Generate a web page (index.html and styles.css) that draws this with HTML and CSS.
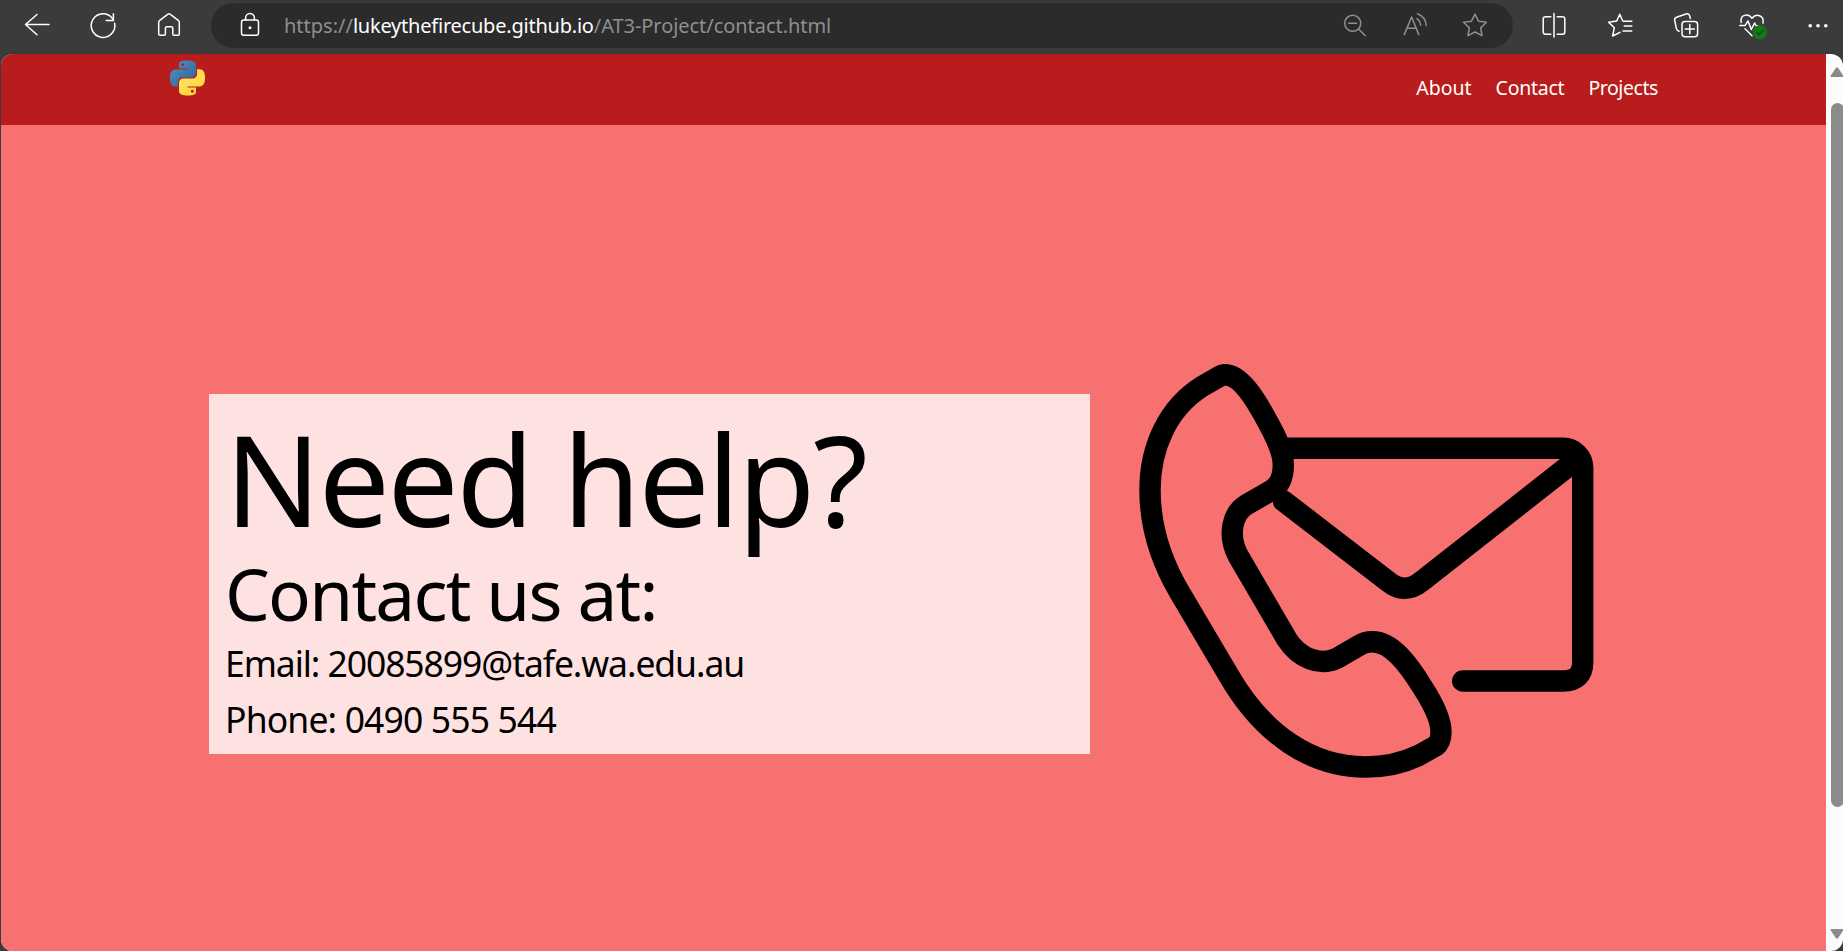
FILE: index.html
```html
<!DOCTYPE html>
<html lang="en">
<head>
<meta charset="utf-8">
<title>Contact</title>
<link rel="stylesheet" href="styles.css">
</head>
<body>
<div class="browser">
  <div class="toolbar">
    <span class="tool"><svg class="icon" viewBox="0 0 30 30"><path d="M3.5 14.5H27M15 4.5L3.5 14.5 15 24.8"/></svg></span>
    <span class="tool"><svg class="icon" viewBox="0 0 30 30"><path d="M26.6 13.2A11.8 11.8 0 1 1 24.6 8.7M25.4 3.8V10.6H18.2"/></svg></span>
    <span class="tool"><svg class="icon" viewBox="0 0 30 30"><path d="M4.7 12.2Q4.7 11.3 5.4 10.7L14 4.2Q15 3.4 16 4.2L24.6 10.7Q25.3 11.3 25.3 12.2V24Q25.3 25.3 24 25.3H20Q18.8 25.3 18.8 24V18.2Q18.8 16.8 17.4 16.8H12.8Q11.4 16.8 11.4 18.2V24Q11.4 25.3 10.2 25.3H6Q4.7 25.3 4.7 24Z"/></svg></span>
    <div class="address">
      <svg class="icon lock" viewBox="0 0 30 30"><rect x="6.5" y="10" width="17" height="15.3" rx="2.3"/><path d="M10.6 10V7.8a4.4 4.4 0 0 1 8.8 0V10"/><circle class="dot" cx="15" cy="17.8" r="1.5"/></svg>
      <div class="url"><span class="scheme">https://</span><span class="host">lukeythefirecube.github.io</span><span class="path">/AT3-Project/contact.html</span></div>
      <div class="address-tools">
        <svg class="icon" viewBox="0 0 30 30"><circle cx="12.7" cy="13.3" r="8"/><path d="M8.7 13.3H16.7M18.5 19L25.3 25.7"/></svg>
        <svg class="icon" viewBox="0 0 30 30"><path d="M4.3 24.6L11.6 7 18.8 24.6M7 18.2H16.2M17 8.7Q20 10.6 20.6 15M17.5 3.8Q25.6 7 26.3 15.5"/></svg>
        <svg class="icon" viewBox="0 0 30 30"><path d="M15 4.2L18.5 11.2 26.4 12.3 20.7 17.9 22 25.7 15 22 8 25.7 9.3 17.9 3.6 12.3 11.5 11.2Z"/></svg>
      </div>
    </div>
    <div class="actions">
      <span class="tool"><svg class="icon" viewBox="0 0 30 30"><path d="M11.8 6.8H6.5Q4.2 6.8 4.2 9V22Q4.2 24.2 6.5 24.2H11.8M18.2 6.8H23.5Q25.8 6.8 25.8 9V22Q25.8 24.2 23.5 24.2H18.2M15 3.5V27"/></svg></span>
      <span class="tool"><svg class="icon" viewBox="0 0 30 30"><path d="M17.6 10.7L14.8 4.3 11.6 11.1 3.6 12.2 9.3 17.8 7.6 26 15 22.3M18 11.3H26.8M19.3 16H26.8M18 21H26.8"/></svg></span>
      <span class="tool"><svg class="icon" viewBox="0 0 30 30"><rect x="11" y="11.4" width="15.6" height="15.4" rx="3"/><path d="M18.8 14.5V23.8M14.2 19.1H23.4M8 21.3Q6 20.6 5.4 18.6L3.7 10.3Q3.3 8 5.5 7.2L15 4Q17.6 3.3 18.5 5.6L19.4 8.4"/></svg></span>
      <span class="tool"><svg class="icon" viewBox="0 0 30 30"><path d="M4.2 12.5C2.7 4.5 11 3 15 8.2 19 3 27.5 5 26 13.2M2.8 15.6H8L11 11 14.3 19.5 17.6 13 19.3 16H21M8 18.8L15 25.7"/><circle class="badge" cx="23" cy="22.3" r="7"/><path class="tick" d="M19.8 22.4L22 24.8 26.5 19.8"/></svg></span>
      <span class="tool"><svg class="icon" viewBox="0 0 30 30"><circle class="dot" cx="7.2" cy="15.7" r="1.8"/><circle class="dot" cx="15" cy="15.7" r="1.8"/><circle class="dot" cx="22.8" cy="15.7" r="1.8"/></svg></span>
    </div>
  </div>
  <div class="viewport">
    <div class="page">
      <header class="site-header">
        <svg class="logo" viewBox="0 0 24 24">
          <defs>
            <linearGradient id="blue" x1="0" y1="0" x2="1" y2="1"><stop offset="0" stop-color="#4f96cb"/><stop offset="1" stop-color="#2d5e8c"/></linearGradient>
            <linearGradient id="yellow" x1="1" y1="1" x2="0" y2="0"><stop offset="0" stop-color="#ffe873"/><stop offset="1" stop-color="#ffd02c"/></linearGradient>
            <path id="snake" d="M14.25.18l.9.2.73.26.59.3.45.32.34.34.25.34.16.33.1.3.04.26.02.2-.01.13V8.5l-.05.63-.13.55-.21.46-.26.38-.3.31-.33.25-.35.19-.35.14-.33.1-.3.07-.26.04-.21.02H8.77l-.69.05-.59.14-.5.22-.41.27-.33.32-.27.35-.2.36-.15.37-.1.35-.07.32-.04.27-.02.21v3.06H3.17l-.21-.03-.28-.07-.32-.12-.35-.18-.36-.26-.36-.36-.35-.46-.32-.59-.28-.73-.21-.88-.14-1.05-.05-1.23.06-1.22.16-1.04.24-.87.32-.71.36-.57.4-.44.42-.33.42-.24.4-.16.36-.1.32-.05.24-.01h.16l.06.01h8.16v-.83H6.18l-.01-2.75-.02-.37.05-.34.11-.31.17-.28.25-.26.31-.23.38-.2.44-.18.51-.15.58-.12.64-.1.71-.06.77-.04.84-.02 1.27.05zm-6.3 1.98l-.23.33-.08.41.08.41.23.34.33.22.41.09.41-.09.33-.22.23-.34.08-.41-.08-.41-.23-.33-.33-.22-.41-.09-.41.09z"/>
          </defs>
          <use href="#snake" fill="url(#blue)"/>
          <use href="#snake" fill="url(#yellow)" transform="rotate(180 12 12)"/>
        </svg>
        <nav class="nav"><a class="about">About</a><a class="contact">Contact</a><a class="projects">Projects</a></nav>
      </header>
      <main class="content">
        <section class="card">
          <h1 class="title">Need help?</h1>
          <h2 class="subtitle">Contact us at:</h2>
          <p class="line email">Email: 20085899@tafe.wa.edu.au</p>
          <p class="line phone">Phone: 0490 555 544</p>
        </section>
        <svg class="art" viewBox="1139 363 456 416">
          <path d="M1202 386.5C1168 408 1150 447 1150 490C1150 526 1161 561 1180 593L1228.500 675C1263 735 1312 767 1365.500 767C1385 767 1404 762.500 1418.500 755.500L1435.500 746Q1441 742 1441 732C1441 718 1432 702 1423 688C1409 665 1392 641.700 1372.500 641.700Q1365 641.700 1359 645.500L1337.500 658C1320 667 1299 658 1287 639.500L1238 555.500C1227 534 1233 513 1246 505L1272 490Q1283.300 483 1283.300 465C1283.300 451 1275 435 1267.500 421.500C1255 398 1240 374.700 1225 374.700Q1222 374.700 1218.500 377Z"/>
          <path d="M1288 448.200H1563A19.500 19.500 0 0 1 1582.700 467.500V662Q1582.700 681 1563 681H1462.700M1283.500 501L1388.400 581.700Q1404.500 595 1421.600 581.400L1578 458.500"/>
        </svg>
      </main>
    </div>
    <div class="scrollbar">
      <svg class="arrow" viewBox="0 0 14 10"><path d="M1.500 10Q0 10 .8 8.500L5.800 1Q7 -.5 8.200 1L13.200 8.500Q14 10 12.500 10Z"/></svg>
      <div class="thumb"></div>
      <svg class="arrow arrow-down" viewBox="0 0 14 10"><path d="M1.500 0Q0 0 .8 1.500L5.800 9Q7 10.500 8.200 9L13.200 1.500Q14 0 12.500 0Z"/></svg>
    </div>
  </div>
</div>
</body>
</html>
```
FILE: styles.css
```css
* { box-sizing: border-box; }
body { margin: 0; font-family: "Noto Sans", "Open Sans", sans-serif; overflow: hidden; }
.browser { width: 1843px; height: 951px; display: flex; flex-direction: column; background: #3b3b3b; overflow: hidden; }

.toolbar { height: 54px; flex: none; display: flex; align-items: flex-start; padding-left: 4px; }
.tool { width: 66px; height: 50px; flex: none; display: flex; align-items: center; justify-content: center; }
.icon { width: 30px; height: 30px; flex: none; fill: none; stroke: #fff; stroke-width: 1.5; stroke-linecap: round; stroke-linejoin: round; overflow: visible; }
.icon .dot { fill: #fff; stroke: none; }
.icon .badge { fill: #107c10; stroke: none; }
.icon .tick { stroke: #2b3b2b; stroke-width: 1.4; }
.address { width: 1302px; height: 45px; margin: 3px 0 0 9px; padding: 0 23px 0 24px; display: flex; align-items: center; flex: none; border-radius: 23px; background: #2b2b2b; }
.address .icon { margin-bottom: 1px; }
.url { margin-left: 19px; flex: 1; font-size: 20px; line-height: 44px; white-space: nowrap; color: #8f8f8f; }
.host { color: #fff; letter-spacing: -.22px; }
.path { letter-spacing: -.05px; }
.address-tools { display: flex; gap: 30px; }
.address-tools .icon { stroke: #8f8f8f; }
.actions { display: flex; margin-left: 8px; width: 322px; }

.viewport { flex: 1; display: flex; margin-left: 1px; border-radius: 12px; overflow: hidden; background: #fcfcfc; }
.page { width: 1825px; flex: none; display: flex; flex-direction: column; background: #f87171; }
.site-header { height: 71px; flex: none; display: flex; justify-content: space-between; padding: 6px 168px 0 169px; background: #b91c1c; }
.logo { width: 35px; height: 36px; }
.nav { display: flex; gap: 24px; color: #fff; font-size: 19.500px; line-height: 56px; }
.contact { letter-spacing: -.25px; }
.projects { letter-spacing: -.43px; }
.content { flex: 1; display: flex; align-items: flex-start; padding: 238px 0 0 208px; }
.card { width: 881px; height: 360px; margin-top: 31px; padding: 13px 16px 0; background: #fee2e2; color: #000; }
.title, .subtitle, .line { margin: 0; font-weight: 400; white-space: nowrap; }
.title { font-size: 126px; line-height: 142px; letter-spacing: -2.1px; }
.subtitle { font-size: 71px; line-height: 86px; padding-top: 2px; margin-bottom: -2px; letter-spacing: -1.75px; }
.line { font-size: 35.500px; line-height: 56px; }
.email { letter-spacing: -1.07px; }
.phone { letter-spacing: -.85px; }
.art { width: 456px; height: 416px; margin-left: 49px; fill: none; stroke: #000; stroke-width: 21.400; stroke-linecap: round; stroke-linejoin: round; }

.scrollbar { flex: 1; display: flex; flex-direction: column; padding: 13px 0 12px 4px; overflow: hidden; }
.arrow { width: 14px; height: 10px; flex: none; fill: #8b8b8b; }
.thumb { width: 13px; height: 704px; flex: none; margin: 26px 0 0 1px; border-radius: 7px; background: #8b8b8b; }
.arrow-down { margin-top: auto; }
```
